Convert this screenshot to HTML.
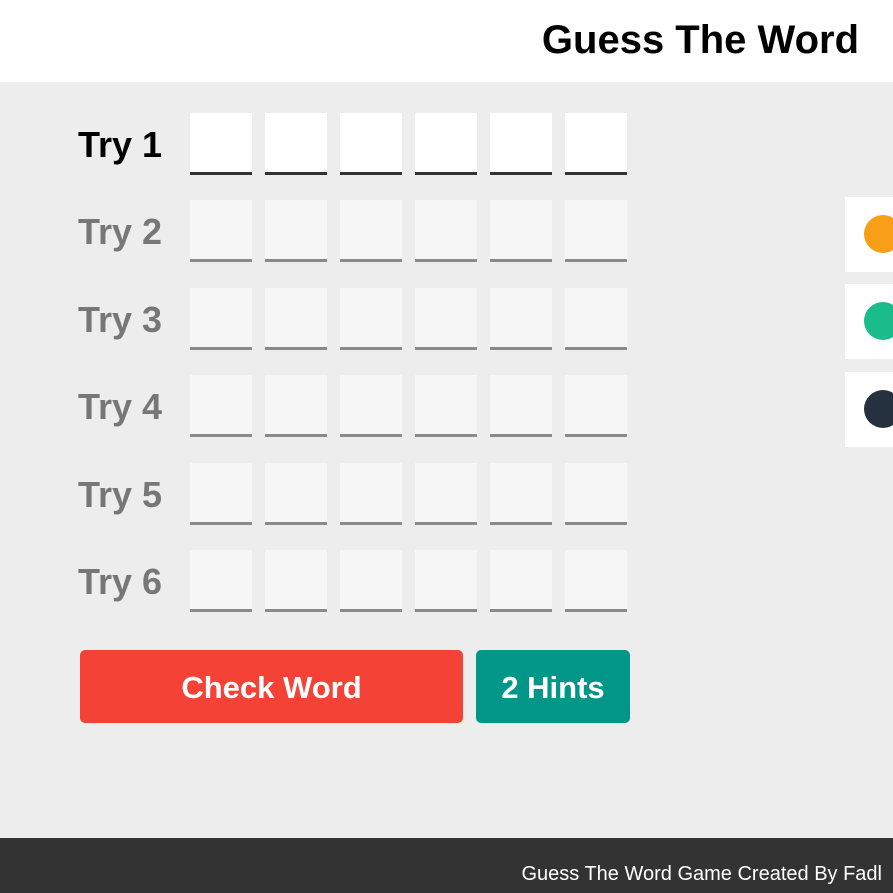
<!DOCTYPE html>
<html><head><style>
*{margin:0;padding:0;box-sizing:border-box}
body{width:893px;height:893px;background:#ededed;font-family:"Liberation Sans",Arial,sans-serif;position:relative;overflow:hidden}
.hdr{position:absolute;left:0;top:0;width:893px;height:82px;background:#fff}
.hdr h1{position:absolute;right:34px;top:17px;font-size:40px;font-weight:bold;color:#000;line-height:46px}
.row{position:absolute;left:78px;height:62px}
.lbl{position:absolute;left:0;top:1px;line-height:62px;font-size:36px;font-weight:bold;color:#777;white-space:nowrap}
.cell{position:absolute;top:0;width:62px;height:62px;background:#f6f6f6;border-bottom:3px solid #8a8a8a}
.active .lbl{color:#000}
.active .cell{background:#fff;border-bottom-color:#333}
.btn{position:absolute;top:650px;height:73px;border-radius:5px;color:#fff;font-weight:bold;font-size:31px;text-align:center;line-height:75px}
.key{position:absolute;left:845px;width:60px;height:75px;background:#fff}
.dot{position:absolute;left:19px;top:18px;width:38px;height:38px;border-radius:50%}
.ftr{position:absolute;left:0;top:838px;width:893px;height:55px;background:#333;color:#fff;font-size:20px}
.ftr span{position:absolute;right:11px;top:24px;line-height:24px}
</style></head><body>
<div class="hdr"><h1>Guess The Word</h1></div>

<div class="row active" style="top:113px"><div class="lbl">Try 1</div>
<div class="cell" style="left:112px"></div><div class="cell" style="left:187px"></div><div class="cell" style="left:262px"></div><div class="cell" style="left:337px"></div><div class="cell" style="left:412px"></div><div class="cell" style="left:487px"></div></div>
<div class="row" style="top:200px"><div class="lbl">Try 2</div>
<div class="cell" style="left:112px"></div><div class="cell" style="left:187px"></div><div class="cell" style="left:262px"></div><div class="cell" style="left:337px"></div><div class="cell" style="left:412px"></div><div class="cell" style="left:487px"></div></div>
<div class="row" style="top:288px"><div class="lbl">Try 3</div>
<div class="cell" style="left:112px"></div><div class="cell" style="left:187px"></div><div class="cell" style="left:262px"></div><div class="cell" style="left:337px"></div><div class="cell" style="left:412px"></div><div class="cell" style="left:487px"></div></div>
<div class="row" style="top:375px"><div class="lbl">Try 4</div>
<div class="cell" style="left:112px"></div><div class="cell" style="left:187px"></div><div class="cell" style="left:262px"></div><div class="cell" style="left:337px"></div><div class="cell" style="left:412px"></div><div class="cell" style="left:487px"></div></div>
<div class="row" style="top:463px"><div class="lbl">Try 5</div>
<div class="cell" style="left:112px"></div><div class="cell" style="left:187px"></div><div class="cell" style="left:262px"></div><div class="cell" style="left:337px"></div><div class="cell" style="left:412px"></div><div class="cell" style="left:487px"></div></div>
<div class="row" style="top:550px"><div class="lbl">Try 6</div>
<div class="cell" style="left:112px"></div><div class="cell" style="left:187px"></div><div class="cell" style="left:262px"></div><div class="cell" style="left:337px"></div><div class="cell" style="left:412px"></div><div class="cell" style="left:487px"></div></div>

<div class="btn" style="left:80px;width:383px;background:#f44336">Check Word</div>
<div class="btn" style="left:476px;width:154px;background:#009688">2 Hints</div>

<div class="key" style="top:197px"><div class="dot" style="background:#f89e17"></div></div>
<div class="key" style="top:284px"><div class="dot" style="background:#1abc8b"></div></div>
<div class="key" style="top:372px"><div class="dot" style="background:#263140"></div></div>

<div class="ftr"><span>Guess The Word Game Created By Fadl</span></div>
</body></html>
